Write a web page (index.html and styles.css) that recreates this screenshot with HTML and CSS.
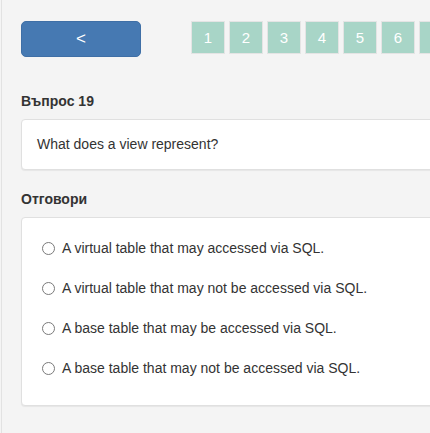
FILE: index.html
```html
<!DOCTYPE html>
<html lang="bg">
<head>
<meta charset="utf-8">
<title>Въпрос 19</title>
<link rel="stylesheet" href="styles.css">
</head>
<body>
<div class="page">
  <div class="topbar">
    <button class="back-btn" type="button">&lt;</button>
    <div class="pager">
      <span class="page-num">1</span>
      <span class="page-num">2</span>
      <span class="page-num">3</span>
      <span class="page-num">4</span>
      <span class="page-num">5</span>
      <span class="page-num">6</span>
      <span class="page-num">7</span>
    </div>
  </div>

  <h2 class="section-title first">Въпрос 19</h2>
  <div class="panel question">What does a view represent?</div>

  <h2 class="section-title">Отговори</h2>
  <div class="panel answers">
    <label class="answer"><span class="radio"></span>A virtual table that may accessed via SQL.</label>
    <label class="answer"><span class="radio"></span>A virtual table that may not be accessed via SQL.</label>
    <label class="answer"><span class="radio"></span>A base table that may be accessed via SQL.</label>
    <label class="answer"><span class="radio"></span>A base table that may not be accessed via SQL.</label>
  </div>
</div>
</body>
</html>
```

FILE: styles.css
```css
html, body {
  margin: 0;
  padding: 0;
  background: #f4f4f4;
  overflow: hidden;
}

body {
  font-family: "Liberation Sans", Arial, Helvetica, sans-serif;
  color: #333;
  font-size: 14px;
}

.page {
  width: 560px;
  margin-left: 1px;
  border-left: 1px solid #e2e2e2;
  padding: 21px 0 0 19px;
  min-height: 433px;
  box-sizing: border-box;
}

.topbar {
  display: flex;
  align-items: flex-start;
  gap: 50px;
}

.back-btn {
  width: 120px;
  height: 36px;
  background: #4679b2;
  border: 1px solid #3f6fa6;
  border-radius: 5px;
  color: #fff;
  font-family: "Liberation Sans", Arial, sans-serif;
  font-size: 17px;
  padding: 0;
  line-height: 34px;
  flex: none;
}

.pager {
  display: flex;
  gap: 4px;
}

.page-num {
  width: 34px;
  height: 33px;
  box-sizing: border-box;
  background: #a8d5c7;
  border: 1px solid #e4e4e4;
  color: #fff;
  font-size: 15px;
  display: flex;
  align-items: center;
  justify-content: center;
  flex: none;
}

.section-title {
  font-size: 14px;
  font-weight: bold;
  margin: 20px 0 9px;
  line-height: 18px;
  color: #333;
}

.section-title.first {
  margin-top: 35px;
}

.panel {
  background: #fff;
  border: 1px solid #e0e0e0;
  border-radius: 4px;
  box-shadow: 0 1px 1px rgba(0, 0, 0, 0.06);
}

.question {
  padding: 16px 15px;
  line-height: 17px;
}

.answers {
  padding: 10px 20px 17px;
}

.answer {
  display: flex;
  align-items: center;
  height: 40px;
  gap: 7px;
}

.radio {
  width: 13px;
  height: 13px;
  box-sizing: border-box;
  border: 1px solid #7a7a7a;
  border-radius: 50%;
  background: #fff;
  flex: none;
}
```
